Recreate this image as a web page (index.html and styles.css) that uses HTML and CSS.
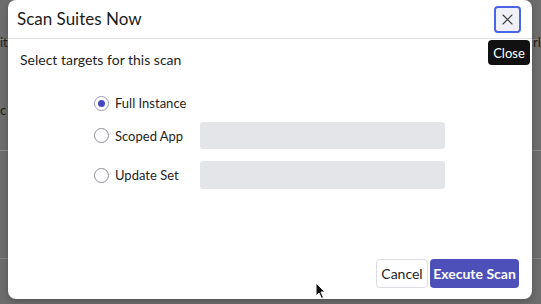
FILE: index.html
```html
<!DOCTYPE html>
<html lang="en">
<head>
    <meta charset="UTF-8">
    <meta name="viewport" content="width=device-width, initial-scale=1.0">
    <title>Scan Suites Now</title>
    <link rel="stylesheet" href="styles.css">
</head>
<body>
    <div class="backdrop">
        <span class="bg-text bg-left-1">it</span>
        <span class="bg-text bg-left-2">c</span>
        <span class="bg-text bg-right-1">rl</span>

        <div class="modal">
            <div class="modal-header">
                <h1 class="modal-title">Scan Suites Now</h1>
                <button class="close-btn" aria-label="Close">
                    <svg width="11" height="11" viewBox="0 0 11 11">
                        <path d="M1 1 L10 10 M10 1 L1 10" stroke="#3a3a3a" stroke-width="1.1" fill="none" stroke-linecap="round"/>
                    </svg>
                </button>
                <div class="tooltip">Close</div>
            </div>

            <div class="modal-body">
                <p class="intro">Select targets for this scan</p>
                <div class="options">
                    <div class="option option-full">
                        <span class="radio checked"></span>
                        <span class="option-label">Full Instance</span>
                    </div>
                    <div class="option option-scoped">
                        <span class="radio"></span>
                        <span class="option-label">Scoped App</span>
                        <div class="field"></div>
                    </div>
                    <div class="option option-update">
                        <span class="radio"></span>
                        <span class="option-label">Update Set</span>
                        <div class="field"></div>
                    </div>
                </div>
            </div>

            <div class="modal-footer">
                <button class="btn btn-cancel">Cancel</button>
                <button class="btn btn-primary">Execute Scan</button>
            </div>
        </div>

        <svg class="cursor" width="12" height="18" viewBox="0 0 12 18">
            <path d="M1 1 L1 14 L4 11 L6.5 16.5 L8.5 15.5 L6 10 L10 10 Z" fill="#111" stroke="#fff" stroke-width="1"/>
        </svg>
    </div>
</body>
</html>
```

FILE: styles.css
```css
* {
    margin: 0;
    padding: 0;
    box-sizing: border-box;
}

body {
    font-family: Lato, "Open Sans", sans-serif;
    background-color: #6d6d6d;
    width: 541px;
    height: 304px;
    overflow: hidden;
}

.backdrop {
    position: relative;
    height: 304px;
    padding: 0 9px 0 8px;
    background:
        linear-gradient(#6d6d6d 0, #6d6d6d 39px, #8a8a8a 39px, #8a8a8a 40px, #6d6d6d 40px, #6d6d6d 150px, #8a8a8a 150px, #8a8a8a 151px, #6d6d6d 151px, #6d6d6d 258px, #858585 258px, #858585 259px, #6d6d6d 259px);
}

.bg-text {
    position: absolute;
    font-size: 13px;
    color: #1e1e1e;
}

.bg-left-1 { left: 0; top: 34px; }
.bg-left-2 { left: 0; top: 102px; }
.bg-right-1 { left: 533px; top: 34px; }

.modal {
    position: relative;
    width: 524px;
    height: 299px;
    background: #fff;
    border-radius: 8px;
    display: flex;
    flex-direction: column;
    box-shadow: 0 2px 6px rgba(0, 0, 0, 0.25);
}

.modal-header {
    position: relative;
    height: 39px;
    display: flex;
    align-items: center;
    justify-content: space-between;
    padding: 0 11px 0 9px;
    border-bottom: 1px solid #e1e1e6;
}

.modal-title {
    font-size: 17px;
    font-weight: 400;
    color: #1c1c1c;
    margin-top: -1px;
}

.close-btn {
    width: 27px;
    height: 27px;
    border: 2px solid #4b63e6;
    border-radius: 4px;
    background: #f0f0f8;
    display: flex;
    align-items: center;
    justify-content: center;
}

.tooltip {
    position: absolute;
    left: 480px;
    top: 40px;
    width: 42px;
    height: 25px;
    background: #111;
    color: #fff;
    font-size: 13px;
    border-radius: 4px;
    display: flex;
    align-items: center;
    justify-content: center;
    z-index: 2;
}

.modal-body {
    padding: 11px 12px 0;
}

.intro {
    font-size: 14px;
    line-height: 20px;
    color: #1e1e1e;
}

.options {
    margin-top: 23px;
    padding-left: 74px;
    display: flex;
    flex-direction: column;
}

.option {
    display: flex;
    align-items: center;
}

.option-full {
    height: 20px;
}

.option-scoped {
    margin-top: 9px;
}

.option-update {
    margin-top: 12px;
}

.radio {
    width: 15px;
    height: 15px;
    border: 1px solid #8d8d95;
    border-radius: 50%;
    display: flex;
    align-items: center;
    justify-content: center;
    flex-shrink: 0;
}

.radio.checked {
    border-color: #9a9ab4;
}

.radio.checked::after {
    content: "";
    width: 7px;
    height: 7px;
    border-radius: 50%;
    background: #4747c2;
}

.option-label {
    font-size: 13px;
    color: #1e1e1e;
    margin-left: 6px;
    width: 85px;
}

.field {
    width: 245px;
    height: 27px;
    background: #e4e5e9;
    border-radius: 3px;
}

.option-update .field {
    height: 28px;
}

.modal-footer {
    margin-top: auto;
    display: flex;
    justify-content: flex-end;
    gap: 2px;
    padding: 0 13px 11px 0;
}

.btn {
    height: 29px;
    font-family: Lato, "Open Sans", sans-serif;
    font-size: 14px;
    border-radius: 4px;
    padding: 0;
    white-space: nowrap;
    cursor: pointer;
}

.btn-cancel {
    width: 52px;
    background: #fff;
    color: #1e1e1e;
    border: 1px solid #dcdce2;
}

.btn-primary {
    width: 89px;
    background: #4e50b9;
    color: #fff;
    font-weight: 700;
    border: none;
}

.cursor {
    position: absolute;
    left: 315px;
    top: 282px;
}
```
